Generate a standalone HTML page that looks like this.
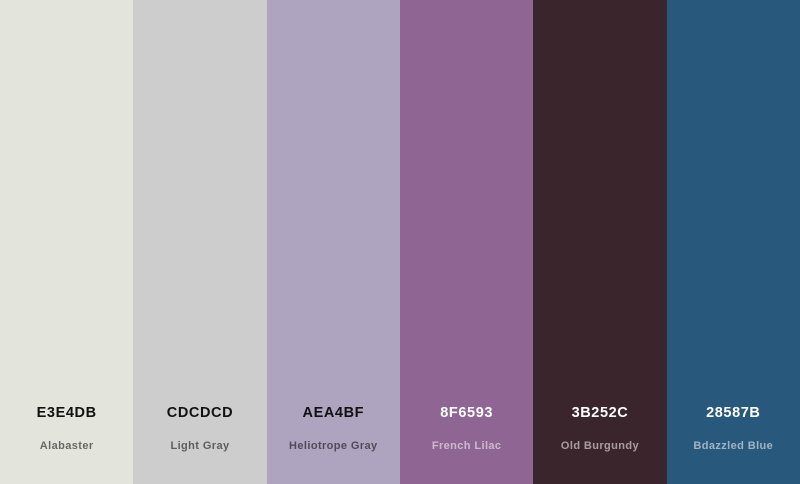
<!DOCTYPE html>
<html><head><meta charset="utf-8"><style>
html,body{margin:0;padding:0;width:800px;height:484px;overflow:hidden}
.w{display:flex;width:800px;height:484px}
.c{flex:1;position:relative;font-family:"Liberation Sans",sans-serif;text-align:center}
.h{position:absolute;left:0;right:0;top:405px;font-size:14.5px;font-weight:bold;letter-spacing:0.6px}
.n{position:absolute;left:0;right:0;top:440px;font-size:11px;font-weight:bold;letter-spacing:0.4px}
.d .h{color:#111}.d .n{color:rgba(0,0,0,0.55)}
.l .h{color:#fff}.l .n{color:rgba(255,255,255,0.55)}
</style></head><body><div class="w">
<div class="c d" style="background:#E3E4DB"><div class="h">E3E4DB</div><div class="n">Alabaster</div></div>
<div class="c d" style="background:#CDCDCD"><div class="h">CDCDCD</div><div class="n">Light Gray</div></div>
<div class="c d" style="background:#AEA4BF"><div class="h">AEA4BF</div><div class="n">Heliotrope Gray</div></div>
<div class="c l" style="background:#8F6593"><div class="h">8F6593</div><div class="n">French Lilac</div></div>
<div class="c l" style="background:#3B252C"><div class="h">3B252C</div><div class="n">Old Burgundy</div></div>
<div class="c l" style="background:#28587B"><div class="h">28587B</div><div class="n">Bdazzled Blue</div></div>
</div></body></html>
